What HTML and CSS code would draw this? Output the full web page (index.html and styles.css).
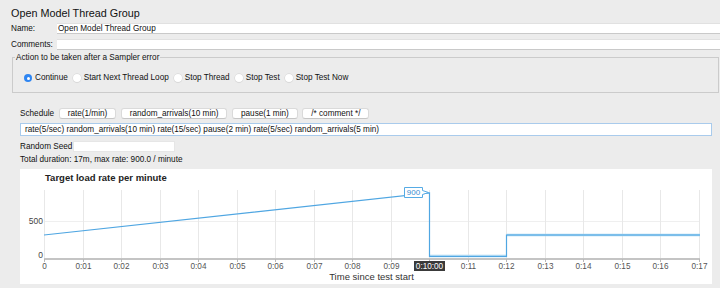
FILE: index.html
```html
<!DOCTYPE html>
<html lang="en">
<head>
    <meta charset="UTF-8">
    <title>Open Model Thread Group</title>
    <link rel="stylesheet" href="styles.css">
</head>
<body>
    <h1 class="title">Open Model Thread Group</h1>

    <div class="field-row">
        <label>Name:</label>
        <div class="text-field">Open Model Thread Group</div>
    </div>
    <div class="field-row comments">
        <label>Comments:</label>
        <div class="text-field"></div>
    </div>

    <div class="group">
        <span class="legend">Action to be taken after a Sampler error</span>
        <div class="radios">
            <label class="radio-item"><span class="radio checked"></span>Continue</label>
            <label class="radio-item"><span class="radio"></span>Start Next Thread Loop</label>
            <label class="radio-item"><span class="radio"></span>Stop Thread</label>
            <label class="radio-item"><span class="radio"></span>Stop Test</label>
            <label class="radio-item"><span class="radio"></span>Stop Test Now</label>
        </div>
    </div>

    <div class="schedule-panel">
        <div class="schedule-row">
            <span>Schedule</span>
            <button class="btn">rate(1/min)</button>
            <button class="btn">random_arrivals(10 min)</button>
            <button class="btn">pause(1 min)</button>
            <button class="btn">/* comment */</button>
        </div>
        <div class="schedule-input">rate(5/sec) random_arrivals(10 min) rate(15/sec) pause(2 min) rate(5/sec) random_arrivals(5 min)</div>
        <div class="seed-row">
            <span class="seed-label">Random Seed</span>
            <div class="seed-field"></div>
        </div>
        <div class="total">Total duration: 17m, max rate: 900.0 / minute</div>

        <div class="chart">
            <svg width="692" height="115" viewBox="0 0 692 115">
                <text class="chart-title" x="25" y="8">Target load rate per minute</text>

                <!-- grid -->
                <g class="grid">
                    <line x1="24" y1="52.5" x2="679" y2="52.5" class="hgrid"/>
                    <line x1="24.5" y1="21" x2="24.5" y2="89"/>
                    <line x1="63.5" y1="21" x2="63.5" y2="89"/>
                    <line x1="101.5" y1="21" x2="101.5" y2="89"/>
                    <line x1="140.5" y1="21" x2="140.5" y2="89"/>
                    <line x1="178.5" y1="21" x2="178.5" y2="89"/>
                    <line x1="217.5" y1="21" x2="217.5" y2="89"/>
                    <line x1="255.5" y1="21" x2="255.5" y2="89"/>
                    <line x1="294.5" y1="21" x2="294.5" y2="89"/>
                    <line x1="332.5" y1="21" x2="332.5" y2="89"/>
                    <line x1="371.5" y1="21" x2="371.5" y2="89"/>
                    <line x1="409.5" y1="21" x2="409.5" y2="89"/>
                    <line x1="448.5" y1="21" x2="448.5" y2="89"/>
                    <line x1="486.5" y1="21" x2="486.5" y2="89"/>
                    <line x1="525.5" y1="21" x2="525.5" y2="89"/>
                    <line x1="563.5" y1="21" x2="563.5" y2="89"/>
                    <line x1="602.5" y1="21" x2="602.5" y2="89"/>
                    <line x1="640.5" y1="21" x2="640.5" y2="89"/>
                    <line x1="679.5" y1="21" x2="679.5" y2="89"/>
                </g>

                <!-- axis + ticks -->
                <line x1="24" y1="90" x2="680" y2="90" class="axis"/>
                <g class="ticks">
                    <line x1="24.5" y1="90" x2="24.5" y2="93"/>
                    <line x1="63.5" y1="90" x2="63.5" y2="93"/>
                    <line x1="101.5" y1="90" x2="101.5" y2="93"/>
                    <line x1="140.5" y1="90" x2="140.5" y2="93"/>
                    <line x1="178.5" y1="90" x2="178.5" y2="93"/>
                    <line x1="217.5" y1="90" x2="217.5" y2="93"/>
                    <line x1="255.5" y1="90" x2="255.5" y2="93"/>
                    <line x1="294.5" y1="90" x2="294.5" y2="93"/>
                    <line x1="332.5" y1="90" x2="332.5" y2="93"/>
                    <line x1="371.5" y1="90" x2="371.5" y2="93"/>
                    <line x1="409.5" y1="90" x2="409.5" y2="93"/>
                    <line x1="448.5" y1="90" x2="448.5" y2="93"/>
                    <line x1="486.5" y1="90" x2="486.5" y2="93"/>
                    <line x1="525.5" y1="90" x2="525.5" y2="93"/>
                    <line x1="563.5" y1="90" x2="563.5" y2="93"/>
                    <line x1="602.5" y1="90" x2="602.5" y2="93"/>
                    <line x1="640.5" y1="90" x2="640.5" y2="93"/>
                    <line x1="679.5" y1="90" x2="679.5" y2="93"/>
                </g>

                <text class="ylabel" x="23" y="52">500</text>
                <text class="ylabel" x="23" y="86">0</text>

                <g class="xlabels">
                    <text x="24.5" y="97">0</text>
                    <text x="63.5" y="97">0:01</text>
                    <text x="101.5" y="97">0:02</text>
                    <text x="140.5" y="97">0:03</text>
                    <text x="178.5" y="97">0:04</text>
                    <text x="217.5" y="97">0:05</text>
                    <text x="255.5" y="97">0:06</text>
                    <text x="294.5" y="97">0:07</text>
                    <text x="332.5" y="97">0:08</text>
                    <text x="371.5" y="97">0:09</text>
                    <text x="448.5" y="97">0:11</text>
                    <text x="486.5" y="97">0:12</text>
                    <text x="525.5" y="97">0:13</text>
                    <text x="563.5" y="97">0:14</text>
                    <text x="602.5" y="97">0:15</text>
                    <text x="640.5" y="97">0:16</text>
                    <text x="679.5" y="97">0:17</text>
                </g>
                <rect x="394" y="92" width="31" height="10" class="cursor-bg"/>
                <text x="409.5" y="97" class="cursor-label">0:10:00</text>

                <text class="axis-title" x="351.5" y="107">Time since test start</text>

                <!-- load line -->
                <line x1="409.5" y1="87" x2="486.5" y2="87" class="line-soft"/>
                <line x1="486.5" y1="66" x2="680" y2="66" class="line-soft"/>
                <polyline points="24,66 409.5,24 409.5,87.5 486.5,87.5 486.5,66 680,66" class="line"/>

                <!-- peak marker -->
                <path d="M384.5,18.5 H402.5 V21.5 L408.5,23.5 L402.5,25.5 V28.5 H384.5 Z" class="marker"/>
                <text x="393.5" y="23.8" class="marker-text">900</text>
            </svg>
        </div>
    </div>
</body>
</html>
```

FILE: styles.css
```css
/* --- Base --- */
* {
    margin: 0;
    padding: 0;
    box-sizing: border-box;
}

body {
    background: #ececec;
    color: #111;
    font-family: "Liberation Sans", Arial, sans-serif;
    font-size: 8.2px;
    line-height: 10px;
    width: 720px;
    height: 288px;
    overflow: hidden;
}

/* --- Title --- */
.title {
    font-size: 10.8px;
    font-weight: normal;
    line-height: 14px;
    height: 20px;
    padding: 6px 0 0 11px;
    color: #111;
}

/* --- Name / comments --- */
.field-row {
    display: flex;
    align-items: center;
    height: 11px;
    margin-top: 3px;
    padding-left: 11px;
}

.field-row.comments {
    margin-top: 5px;
}

.field-row label {
    width: 46px;
}

.text-field {
    flex: 1;
    height: 11px;
    background: #fff;
    border-top: 1px solid #e1e1e1;
    border-bottom: 1px solid #c9c9c9;
    padding-left: 1px;
    line-height: 9px;
}

/* --- Sampler error group --- */
.group {
    position: relative;
    height: 36px;
    margin: 7px 1px 0 12px;
    border: 1px solid #cbcbcb;
}

.legend {
    position: absolute;
    top: -5px;
    left: 2px;
    padding: 0 1px;
    background: #ececec;
}

.radios {
    display: flex;
    align-items: center;
    padding: 15px 0 0 11px;
}

.radio-item {
    display: flex;
    align-items: center;
    margin-right: 5px;
}

.radio {
    width: 8px;
    height: 8px;
    margin-right: 3px;
    border-radius: 50%;
    background: #fff;
    box-shadow: 0 0 0 0.5px #d2d2d2, 0 0.5px 1px rgba(0, 0, 0, 0.12);
    position: relative;
}

.radio.checked {
    background: #2f86f2;
    box-shadow: none;
}

.radio.checked::after {
    content: "";
    position: absolute;
    left: 2.5px;
    top: 2.5px;
    width: 3px;
    height: 3px;
    border-radius: 50%;
    background: #fff;
}

/* --- Schedule panel --- */
.schedule-panel {
    padding: 0 8px 0 20px;
}

.schedule-row {
    display: flex;
    align-items: center;
    gap: 4.5px;
    height: 11px;
    margin-top: 15px;
}

.btn {
    height: 11px;
    padding: 0 8px;
    font-family: inherit;
    font-size: 8.2px;
    line-height: 9px;
    color: #111;
    background: #fff;
    border: 1px solid #dadada;
    border-bottom-color: #c6c6c6;
    border-radius: 3px;
}

.schedule-input {
    height: 13px;
    margin-top: 4px;
    padding-left: 4px;
    line-height: 11px;
    background: #fff;
    border: 1px solid #a9cbec;
}

.seed-row {
    display: flex;
    align-items: center;
    height: 11px;
    margin-top: 5px;
}

.seed-label {
    width: 53px;
}

.seed-field {
    width: 102px;
    height: 11px;
    background: #fff;
    border: 1px solid #e6e6e6;
}

.total {
    margin-top: 3px;
    line-height: 10px;
}

/* --- Chart --- */
.chart {
    height: 115px;
    margin-top: 4px;
    background: #fff;
}

.chart svg {
    display: block;
    font-family: "Liberation Sans", Arial, sans-serif;
}

.chart-title {
    font-size: 9.5px;
    font-weight: bold;
    fill: #222;
    dominant-baseline: central;
}

.grid line {
    stroke: #e8e8e8;
    stroke-width: 1;
}

.grid .hgrid {
    stroke: #efefef;
}

.axis {
    stroke: #c4c4c4;
    stroke-width: 2;
}

.ticks line {
    stroke: #b8b8b8;
    stroke-width: 1;
}

.ylabel {
    font-size: 8.5px;
    fill: #444;
    text-anchor: end;
    dominant-baseline: central;
}

.xlabels text {
    font-size: 8.2px;
    fill: #555;
    text-anchor: middle;
    dominant-baseline: central;
}

.cursor-bg {
    fill: #3a3a3a;
}

.cursor-label {
    font-size: 8.2px;
    fill: #fff;
    text-anchor: middle;
    dominant-baseline: central;
}

.axis-title {
    font-size: 9.5px;
    fill: #333;
    text-anchor: middle;
    dominant-baseline: central;
}

.line {
    fill: none;
    stroke: #4fa6e2;
    stroke-width: 1.2;
}

.line-soft {
    stroke: #a9d6f3;
    stroke-width: 2.5;
}

.marker {
    fill: #fff;
    stroke: #56abe5;
    stroke-width: 1;
}

.marker-text {
    font-size: 8px;
    fill: #3a8cd0;
    text-anchor: middle;
    dominant-baseline: central;
}
```
